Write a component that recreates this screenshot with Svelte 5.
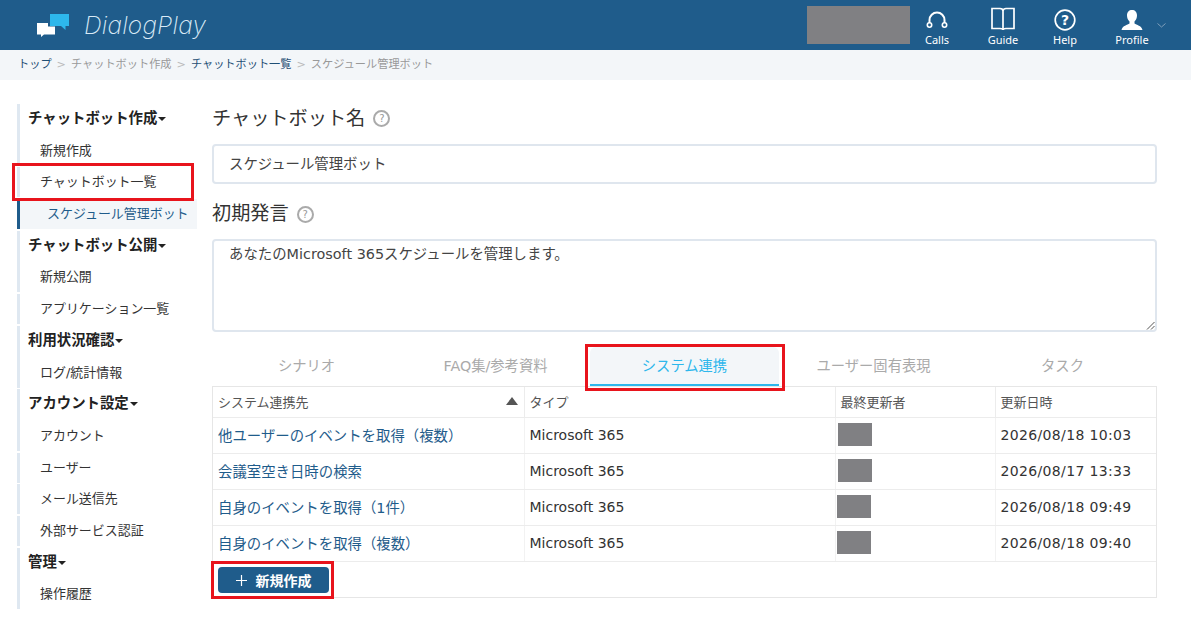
<script>
	const menu = [
		{ head: 'チャットボット作成', items: ['新規作成', 'チャットボット一覧'] },
		{ head: 'チャットボット公開', items: ['新規公開', 'アプリケーション一覧'] },
		{ head: '利用状況確認', items: ['ログ/統計情報'] },
		{ head: 'アカウント設定', items: ['アカウント', 'ユーザー', 'メール送信先', '外部サービス認証'] },
		{ head: '管理', items: ['操作履歴'] }
	];
	const tabs = ['シナリオ', 'FAQ集/参考資料', 'システム連携', 'ユーザー固有表現', 'タスク'];
	const rows = [
		{ name: '他ユーザーのイベントを取得（複数）', date: '2026/08/18 10:03', nudge: 0 },
		{ name: '会議室空き日時の検索', date: '2026/08/17 13:33', nudge: 0 },
		{ name: '自身のイベントを取得（1件）', date: '2026/08/18 09:49', nudge: -1 },
		{ name: '自身のイベントを取得（複数）', date: '2026/08/18 09:40', nudge: -1 }
	];
</script>

<div class="page">
	<header>
		<div class="logo">
			<svg width="34" height="24" viewBox="0 0 34 24">
				<path d="M14 1h19v12h-3.500v4l-4.500-4h-11z" fill="#2db7ec" />
				<path d="M1 10h11v3.500h7v8h-11l-3 2.500v-2.500h-4z" fill="#fff" />
			</svg>
			<span>DialogPlay</span>
		</div>
		<div class="masked"></div>
		<nav>
			<div class="nav-item calls">
				<svg width="22" height="20" viewBox="0 0 22 20" fill="none" stroke="#fff">
					<path d="M3.500 12V9a7.500 7.500 0 0 1 15 0v3" stroke-width="2" />
					<circle cx="3.500" cy="14" r="2.200" stroke-width="1.600" />
					<circle cx="18.500" cy="14" r="2.200" stroke-width="1.600" />
				</svg>
				<span>Calls</span>
			</div>
			<div class="nav-item guide">
				<svg width="24" height="24" viewBox="0 0 24 24" fill="none" stroke="#fff" stroke-width="1.700">
					<path d="M1 1.500h8c1.500 0 3 1 3 2.500c0-1.500 1.500-2.500 3-2.500h8v20h-8c-1.500 0-3 .5-3 1.500c0-1-1.500-1.500-3-1.500h-8z" />
					<path d="M12 4v19" />
				</svg>
				<span>Guide</span>
			</div>
			<div class="nav-item help">
				<svg width="22" height="22" viewBox="0 0 22 22">
					<circle cx="11" cy="11" r="9.800" fill="none" stroke="#fff" stroke-width="1.700" />
					<text x="11" y="16" text-anchor="middle" class="q">?</text>
				</svg>
				<span>Help</span>
			</div>
			<div class="nav-item profile">
				<svg width="22" height="22" viewBox="0 0 22 22">
					<path d="M11 1c3 0 5 2 5 5.500c0 2.500-1 4.500-2.500 6v2c2 1.500 7 2 8 6.500h-21c1-4.500 6-5 8-6.500v-2c-1.500-1.500-2.500-3.500-2.500-6c0-3.500 2-5.500 5-5.500z" fill="#fff" />
				</svg>
				<span>Profile</span>
				<svg class="caret" width="9" height="5" viewBox="0 0 9 5" fill="none" stroke="#7f9fba">
					<path d="M.5.500l4 3.500l4-3.500" />
				</svg>
			</div>
		</nav>
	</header>

	<div class="crumbs">
		<a href="#top">トップ</a><i>&gt;</i><span>チャットボット作成</span><i>&gt;</i><a href="#list">チャットボット一覧</a><i>&gt;</i><span>スケジュール管理ボット</span>
	</div>

	<div class="body">
		<aside>
			{#each menu as group}
				<div class="group-head">{group.head}<b class="down"></b></div>
				{#each group.items as item}
					<div class="side-item">{item}</div>
					{#if item === 'チャットボット一覧'}
						<div class="side-item active">スケジュール管理ボット</div>
					{/if}
				{/each}
			{/each}
			<div class="mark side-mark"></div>
		</aside>

		<main>
			<h2>チャットボット名 <span class="hint">?</span></h2>
			<div class="field">スケジュール管理ボット</div>
			<h2 class="second">初期発言 <span class="hint">?</span></h2>
			<div class="field area">
				あなたのMicrosoft 365スケジュールを管理します。
				<svg class="grip" width="9" height="9" viewBox="0 0 9 9" stroke="#555" fill="none">
					<path d="M1 8.500l7.500-7.500M5 8.500l3.500-3.500" />
				</svg>
			</div>

			<div class="tabs">
				{#each tabs as tab, i}
					<div class="tab" class:on={i === 2}>{tab}</div>
				{/each}
				<div class="mark tab-mark"></div>
			</div>

			<div class="panel">
				<table>
					<colgroup>
						<col style="width:311px" />
						<col style="width:311px" />
						<col style="width:160px" />
						<col />
					</colgroup>
					<thead>
						<tr>
							<th>システム連携先<b class="up"></b></th>
							<th>タイプ</th>
							<th>最終更新者</th>
							<th>更新日時</th>
						</tr>
					</thead>
					<tbody>
						{#each rows as row}
							<tr>
								<td><a href="#row">{row.name}</a></td>
								<td>Microsoft 365</td>
								<td class="who"><div class="blot" style="margin-left:{row.nudge}px"></div></td>
								<td class="when">{row.date}</td>
							</tr>
						{/each}
					</tbody>
				</table>
				<div class="foot">
					<button>
						<svg width="11" height="11" viewBox="0 0 11 11" stroke="#fff" stroke-width="1.200">
							<path d="M5.500 0v11M0 5.500h11" />
						</svg>
						新規作成
					</button>
					<div class="mark btn-mark"></div>
				</div>
			</div>
		</main>
	</div>
</div>

<style>
	:global(body) {
		margin: 0;
		background: #fff;
	}
	.page {
		width: 1191px;
		height: 617px;
		overflow: hidden;
		font-family: "DejaVu Sans", "Noto Sans CJK JP", sans-serif;
		font-size: 14px;
		color: #333;
		position: relative;
		text-spacing-trim: space-all;
	}
	header {
		height: 50px;
		background: #1f5c8b;
		display: flex;
		align-items: flex-start;
		color: #fff;
	}
	.logo {
		display: flex;
		align-items: center;
		margin-left: 36px;
		height: 50px;
		width: 771px;
	}
	.logo svg {
		margin-top: -1px;
	}
	.logo span {
		font-family: Inter, sans-serif;
		font-style: italic;
		font-weight: 200;
		font-size: 24.500px;
		letter-spacing: 0.200px;
		color: #d9eaf6;
		margin-left: 14px;
	}
	.masked {
		width: 103px;
		height: 38px;
		margin-top: 6px;
		background: #808083;
	}
	nav {
		display: flex;
		position: relative;
		flex: 1;
	}
	.nav-item {
		height: 50px;
		box-sizing: border-box;
		display: flex;
		flex-direction: column;
		align-items: center;
		justify-content: flex-end;
		padding-bottom: 3px;
		font-family: "Noto Sans", sans-serif;
		font-size: 11px;
		line-height: 14px;
		position: relative;
	}
	.nav-item svg {
		margin-bottom: 2px;
	}
	.calls { width: 54px; margin-right: 12px; }
	.guide { width: 54px; margin-right: 8px; }
	.help { width: 54px; margin-right: 13px; }
	.profile { width: 54px; }
	.q {
		font: bold 14px "DejaVu Sans", sans-serif;
		fill: #fff;
	}
	.nav-item .caret {
		position: absolute;
		right: -7px;
		top: 23px;
	}
	.crumbs {
		height: 30px;
		line-height: 30px;
		background: #f3f6f9;
		padding-left: 18px;
		font-size: 11.200px;
		color: #999;
	}
	.crumbs a {
		color: #1f4f75;
		text-decoration: none;
	}
	.crumbs i {
		font-style: normal;
		color: #bbb;
		margin: 0 5px;
	}
	.body {
		display: flex;
		padding: 24px 34px 0 17px;
	}
	aside {
		width: 180px;
		flex: none;
		margin-right: 15px;
		position: relative;
	}
	.group-head {
		height: 31.700px;
		line-height: 29px;
		border-left: 3px solid #dfe8f1;
		padding-left: 8px;
		font-weight: 700;
		font-size: 14.400px;
		color: #222;
	}
	.down {
		display: inline-block;
		border: 4px solid transparent;
		border-top-color: #222;
		border-bottom: 0;
		margin-left: 1px;
		vertical-align: 2px;
	}
	.side-item {
		height: 30px;
		line-height: 29px;
		border-left: 3px solid #dfe8f1;
		padding-left: 20px;
		font-size: 12.960px;
		color: #333;
		margin-bottom: 1.700px;
		white-space: nowrap;
	}
	.side-item.active {
		border-left-color: #1f5c8b;
		background: #f3f6f9;
		padding-left: 27px;
		color: #1f5c8b;
	}
	main {
		flex: 1;
		min-width: 0;
	}
	h2 {
		margin: 0;
		padding-top: 1px;
		font-size: 19.200px;
		font-weight: 400;
		line-height: 27px;
		color: #333;
		display: flex;
		align-items: center;
		gap: 8px;
	}
	h2.second {
		margin-top: 16px;
		padding-top: 0;
		line-height: 28px;
	}
	.hint {
		width: 13px;
		height: 13px;
		border: 2px solid #aaa;
		border-radius: 50%;
		font-size: 10px;
		line-height: 13px;
		text-align: center;
		color: #999;
	}
	.field {
		box-sizing: border-box;
		height: 40px;
		margin-top: 12px;
		border: 2px solid #dfe6ee;
		border-radius: 4px;
		padding: 0 15px;
		line-height: 37px;
		font-size: 14.400px;
		color: #444;
	}
	.area {
		height: 93px;
		margin-top: 11px;
		line-height: 27px;
		position: relative;
	}
	.grip {
		position: absolute;
		right: 0;
		bottom: 0;
	}
	.tabs {
		display: flex;
		height: 41px;
		margin-top: 13px;
		position: relative;
		border-bottom: 1px solid #e6e6e6;
	}
	.tab {
		flex: 1;
		text-align: center;
		line-height: 42px;
		color: #aaa;
		font-size: 14.300px;
	}
	.tab.on {
		color: #2db7ec;
		background: #f3f6f9;
		border-radius: 6px 6px 0 0;
		border-bottom: 2px solid #2db7ec;
		height: 37px;
		margin-top: 2px;
		line-height: 39px;
	}
	.panel {
		border: 1px solid #e6e6e6;
		border-top: 0;
		height: 211px;
		box-sizing: border-box;
	}
	table {
		width: 100%;
		table-layout: fixed;
		border-collapse: collapse;
	}
	th {
		height: 28px;
		padding: 0 5px 2px;
		text-align: left;
		font-weight: 400;
		font-size: 13px;
		color: #555;
		border-bottom: 1px solid #ececec;
		border-left: 1px solid #ececec;
		position: relative;
	}
	th:first-child,
	td:first-child {
		border-left: 0;
	}
	.up {
		position: absolute;
		right: 6px;
		top: 10px;
		border: 6px solid transparent;
		border-bottom: 8px solid #555;
		border-top: 0;
	}
	td {
		height: 33px;
		padding: 0 5px 2px;
		border-bottom: 1px solid #ececec;
		border-left: 1px solid #f2f2f2;
		color: #333;
	}
	td a {
		font-size: 14.400px;
		color: #1f5c8b;
		text-decoration: none;
	}
	td.who {
		padding: 0 2px 2px;
	}
	td.when {
		letter-spacing: 0.350px;
	}
	.blot {
		width: 34px;
		height: 23px;
		background: #808083;
	}
	.foot {
		padding: 5px;
		position: relative;
	}
	button {
		display: flex;
		align-items: center;
		justify-content: center;
		gap: 9px;
		width: 111px;
		height: 26px;
		border: 0;
		border-radius: 4px;
		background: #1f5c8b;
		color: #fff;
		font: 700 14px "DejaVu Sans", "Noto Sans CJK JP", sans-serif;
		padding: 0;
	}
	.mark {
		position: absolute;
		box-sizing: border-box;
		border: 3px solid #e8141c;
		pointer-events: none;
	}
	.side-mark {
		left: -5px;
		top: 59px;
		width: 182px;
		height: 38px;
	}
	.tab-mark {
		left: 373px;
		top: -1px;
		width: 200px;
		height: 47px;
	}
	.btn-mark {
		left: -2px;
		top: -1px;
		width: 123px;
		height: 38px;
	}
</style>
